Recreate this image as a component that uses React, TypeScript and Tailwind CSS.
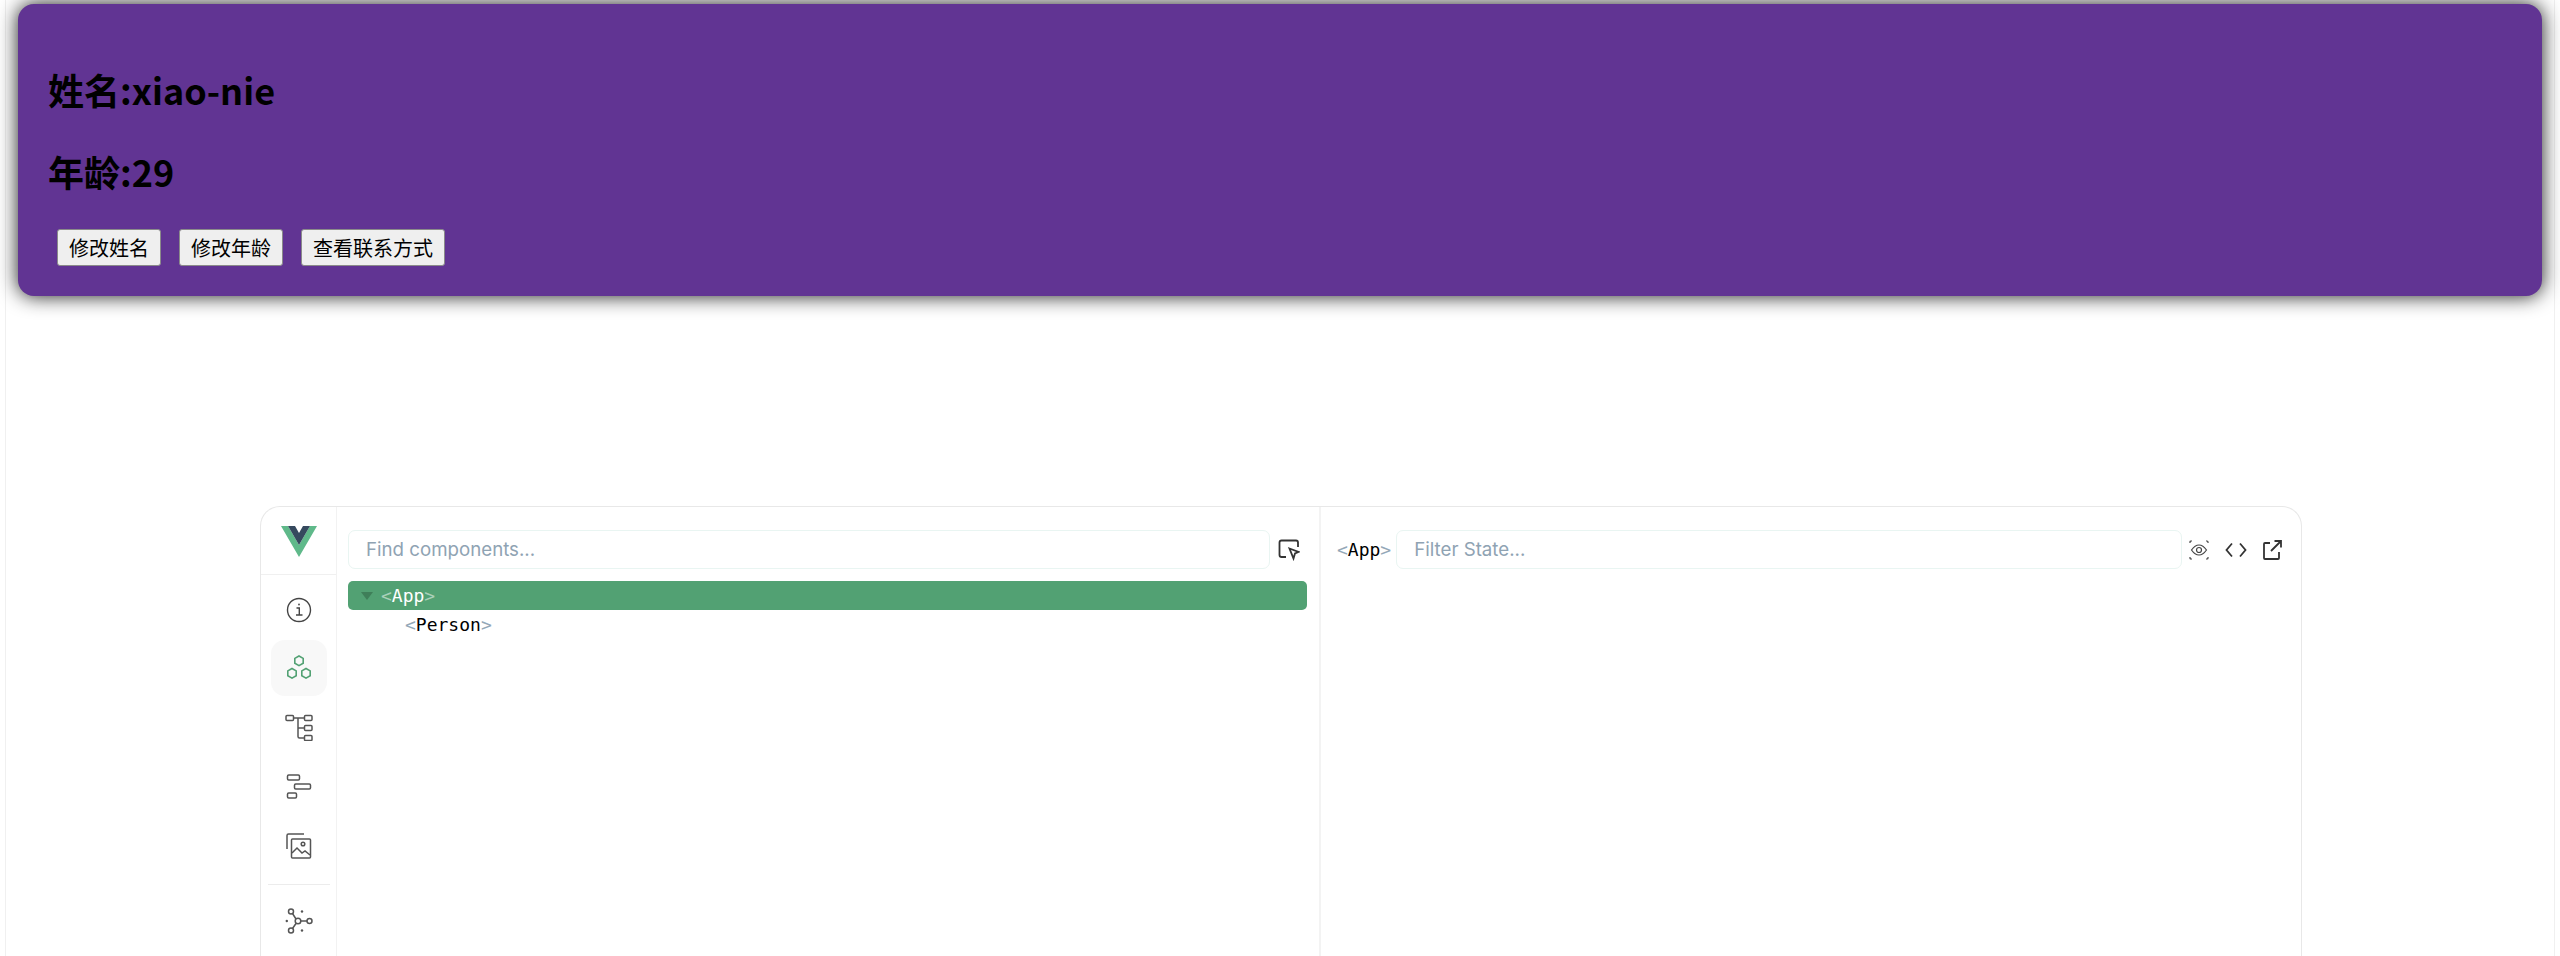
import React from "react";

const cjk = { fontFamily: '"Noto Sans CJK SC", "Noto Sans", sans-serif' };

function VueLogo() {
  return (
    <svg width="36" height="31" viewBox="0 0 36 31">
      <path d="M0 0h7l11 19L29 0h7L18 31z" fill="#5fb98a" />
      <path d="M7 0h7l4 7 4-7h7L18 19z" fill="#35495e" />
    </svg>
  );
}

function NavIcons() {
  return (
    <div className="flex flex-col items-center">
      <div className="flex h-[65px] w-[56px] items-center justify-center pt-[4px]">
        <svg width="26" height="26" viewBox="0 0 26 26" fill="none" stroke="#444" strokeWidth="1.4">
          <circle cx="13" cy="13" r="11.5" />
          <circle cx="13" cy="7.5" r="0.9" fill="#444" stroke="none" />
          <path d="M10.5 11h2.8v6.5M10 18h6.5" />
        </svg>
      </div>
      <div className="flex h-[56px] w-[56px] items-center justify-center rounded-[14px] bg-[#f8f8f8]">
        <svg width="26" height="26" viewBox="0 0 26 26" fill="none" stroke="#52a173" strokeWidth="1.6">
          <path d="M13 1l4.200 2.400v4.800L13 10.600 8.800 8.200V3.400z" />
          <path d="M6 13.500l4.200 2.400v4.800L6 23.100l-4.200-2.400v-4.800z" />
          <path d="M20 13.500l4.200 2.400v4.800L20 23.100l-4.200-2.400v-4.800z" />
        </svg>
      </div>
      <div className="flex h-[62px] w-[56px] items-center justify-center">
        <svg width="28" height="27" viewBox="0 0 28 27" fill="none" stroke="#555" strokeWidth="1.5">
          <rect x="1" y="1.500" width="7.500" height="5" rx="1" />
          <rect x="19.500" y="1.500" width="7.500" height="5" rx="1" />
          <rect x="19.500" y="11.500" width="7.500" height="5" rx="1" />
          <rect x="19.500" y="21.500" width="7.500" height="5" rx="1" />
          <path d="M8.500 4h11M13 4v18.500q0 1.500 1.500 1.500h5M13 14h6.500" />
        </svg>
      </div>
      <div className="flex h-[56px] w-[56px] items-center justify-center">
        <svg width="26" height="25" viewBox="0 0 26 25" fill="none" stroke="#555" strokeWidth="1.5">
          <rect x="1.500" y="1" width="12" height="5" rx="1.200" />
          <rect x="8.500" y="10" width="16" height="5" rx="1.200" />
          <rect x="1.500" y="19" width="9" height="5" rx="1.200" />
        </svg>
      </div>
      <div className="flex h-[64px] w-[56px] items-center justify-center">
        <svg width="26" height="26" viewBox="0 0 26 26" fill="none" stroke="#555" strokeWidth="1.5">
          <path d="M1 16V2.500Q1 1 2.500 1H18" />
          <rect x="5.500" y="6" width="19" height="19" rx="1" />
          <circle cx="17" cy="11" r="1.800" />
          <path d="M6 20l5-5 5 5 3-2 5 4" />
        </svg>
      </div>
      <div className="mt-[6px] h-px w-[62px] bg-[#ececec]" />
      <div className="flex h-[72px] w-[56px] items-center justify-center">
        <svg width="28" height="26" viewBox="0 0 28 26" fill="none" stroke="#555" strokeWidth="1.5">
          <circle cx="6" cy="3.500" r="2.500" />
          <circle cx="13" cy="13" r="2.800" />
          <circle cx="24.500" cy="13" r="2.500" />
          <circle cx="6" cy="22.500" r="2.500" />
          <path d="M7.500 5.500l3.500 5.500M16 13h6M11 15.500l-3.500 5" />
          <circle cx="1.800" cy="13" r="1.200" fill="#555" stroke="none" />
          <circle cx="17" cy="3.500" r="1.200" fill="#555" stroke="none" />
          <circle cx="17" cy="22.500" r="1.200" fill="#555" stroke="none" />
        </svg>
      </div>
    </div>
  );
}

function Tag({ name, bright }: { name: string; bright?: boolean }) {
  return (
    <span className="font-['DejaVu_Sans_Mono',monospace] text-[18px] leading-none">
      <span className={bright ? "text-[#a9d0b9]" : "text-[#94a8b8]"}>&lt;</span>
      <span className={bright ? "text-white" : "text-black"}>{name}</span>
      <span className={bright ? "text-[#a9d0b9]" : "text-[#94a8b8]"}>&gt;</span>
    </span>
  );
}

function SearchBox({ placeholder }: { placeholder: string }) {
  return (
    <div className="flex h-[39px] min-w-0 flex-1 items-center rounded-[7px] border border-[#e9f5f2] px-[17px] pt-[2px] font-['Inter',sans-serif] text-[18.7px] text-[#8fa3b3]">
      {placeholder}
    </div>
  );
}

export default function App() {
  return (
    <div className="h-[956px] overflow-hidden bg-white px-[5px]">
      <div className="h-full border-x border-[#f0f0f0] px-[12px] pt-[4px]" style={cjk}>
        <div className="h-[292px] rounded-[16px] bg-[#613493] pl-[30px] pt-[58px] shadow-[0_0_20px_rgba(0,0,0,0.9)]">
          <h2 className="text-[36px] font-bold leading-[54px] text-black">姓名:xiao-nie</h2>
          <h2 className="mt-[28px] text-[36px] font-bold leading-[54px] text-black">年龄:29</h2>
          <div className="mt-[31px] flex gap-[18px] pl-[9px]">
            <button className="h-[37px] rounded-[3px] border border-[#8a8a8a] bg-[#efefef] px-[11px] text-[20px] leading-none text-black">修改姓名</button>
            <button className="h-[37px] rounded-[3px] border border-[#8a8a8a] bg-[#efefef] px-[11px] text-[20px] leading-none text-black">修改年龄</button>
            <button className="h-[37px] rounded-[3px] border border-[#8a8a8a] bg-[#efefef] px-[11px] text-[20px] leading-none text-black">查看联系方式</button>
          </div>
        </div>

        <div className="ml-[242px] mt-[210px] flex h-[460px] w-[2042px] rounded-t-[20px] border border-b-0 border-[#e8e8e8]">
          <div className="flex w-[76px] shrink-0 flex-col border-r border-[#f2f2f2]">
            <div className="flex h-[68px] items-start justify-center border-b border-[#f0f0f0] pt-[19px]">
              <VueLogo />
            </div>
            <NavIcons />
          </div>

          <div className="flex w-[984px] shrink-0 flex-col border-r-2 border-[#f3f3f3] px-[11px] pt-[23px]">
            <div className="flex items-center">
              <SearchBox placeholder="Find components..." />
              <div className="flex w-[38px] shrink-0 justify-start pl-[8px]">
                <svg width="22" height="22" viewBox="0 0 22 22" fill="none" stroke="#333" strokeWidth="1.800">
                  <path d="M8 18H3.500Q1.500 18 1.500 16V3.500Q1.500 1.500 3.500 1.500h14.500q2 0 2 2V8" />
                  <path d="M11.500 9.500l9 3.500-3.500 1.500-1.500 5z" fill="none" />
                </svg>
              </div>
            </div>
            <div className="mt-[12px] flex h-[29px] w-[959px] items-center rounded-[5px] bg-[#52a173] pl-[13px]">
              <span className="mr-[8px] h-0 w-0 border-x-[6px] border-t-[8px] border-x-transparent border-t-[#3f7f59]" />
              <Tag name="App" bright />
            </div>
            <div className="flex h-[30px] items-center pl-[57px]">
              <Tag name="Person" />
            </div>
          </div>

          <div className="flex min-w-0 flex-1 items-start pl-[16px] pr-[19px] pt-[23px]">
            <div className="flex w-full items-center">
              <span className="mb-[2px] mr-[5px]">
                <Tag name="App" />
              </span>
              <SearchBox placeholder="Filter State..." />
              <div className="ml-[7px] flex items-center gap-[16px]">
                <svg width="20" height="20" viewBox="0 0 20 20" fill="none" stroke="#444" strokeWidth="1.200">
                  <path d="M1 3V2q0-1 1-1h1M17 1h1q1 0 1 1v1M19 17v1q0 1-1 1h-1M3 19H2q-1 0-1-1v-1" />
                  <path d="M2.500 10q3.500-5 7.500-5t7.500 5q-3.500 5-7.500 5t-7.500-5z" />
                  <circle cx="10" cy="10" r="2.500" />
                </svg>
                <svg width="22" height="16" viewBox="0 0 22 16" fill="none" stroke="#333" strokeWidth="1.800">
                  <path d="M7 1.500L1.500 8 7 14.500M15 1.500L20.500 8 15 14.500" />
                </svg>
                <svg width="19" height="20" viewBox="0 0 19 20" fill="none" stroke="#333" strokeWidth="1.800">
                  <path d="M7 3H2q-1 0-1 1v14q0 1 1 1h13q1 0 1-1v-6" />
                  <path d="M8 11L17.500 1.500M11.500 1H18v6.500" />
                </svg>
              </div>
            </div>
          </div>
        </div>
      </div>
    </div>
  );
}
